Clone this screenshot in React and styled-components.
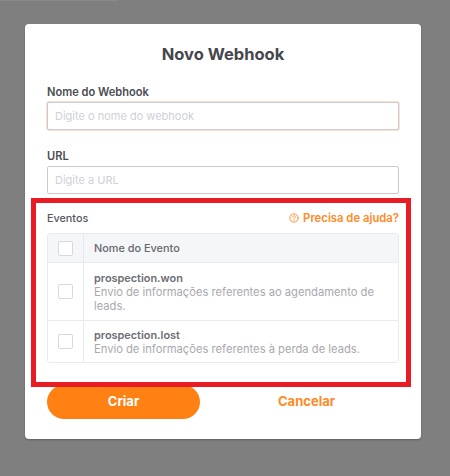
import React from 'react';
import styled, { createGlobalStyle } from 'styled-components';

const GlobalStyle = createGlobalStyle`
	html, body {
		margin: 0;
		padding: 0;
		height: 100%;
		background: #7f7f7f;
		font-family: Inter, "Open Sans", sans-serif;
	}
	* {
		box-sizing: border-box;
	}
`;

const Overlay = styled.div`
	position: relative;
	width: 450px;
	height: 476px;
	padding: 24px 29px 0 25px;
	overflow: hidden;
	background: #7f7f7f;

	&::before {
		content: '';
		position: absolute;
		top: 0;
		left: 0;
		width: 118px;
		height: 1px;
		background: #8a8a8a;
	}
`;

const Card = styled.form`
	position: relative;
	width: 396px;
	height: 415px;
	padding: 20px 22px 0;
	background: #fff;
	border-radius: 4px;
	box-shadow: 0 1px 2px rgba(0, 0, 0, 0.25);
`;

const Title = styled.h2`
	margin: 0 0 21px;
	height: 20px;
	font-size: 16.5px;
	line-height: 20px;
	font-weight: 700;
	text-align: center;
	color: #44464c;
`;

const Field = styled.div`
	display: flex;
	flex-direction: column;
	gap: 3px;
	margin-bottom: ${({ $last }) => ($last ? '17px' : '19px')};
`;

const Label = styled.label`
	height: 14px;
	font-size: 11.1px;
	line-height: 14px;
	font-weight: 600;
	color: #4a4c52;
`;

const Input = styled.input`
	width: 100%;
	height: 28px;
	padding: 0 7px;
	font-family: inherit;
	font-size: 11px;
	color: #44464c;
	background: #fff;
	border: 1px solid #c9cad3;
	border-radius: 2px;
	outline: none;
	box-shadow: ${({ $focused }) => ($focused ? '0 0 0 1px #fde3cf' : 'none')};

	&::placeholder {
		color: #cfd0d8;
		opacity: 1;
	}
`;

const EventsHeader = styled.div`
	display: flex;
	align-items: center;
	justify-content: space-between;
	height: 14px;
	margin-bottom: 8px;
`;

const EventsTitle = styled.span`
	font-size: 10.8px;
	font-weight: 500;
	color: #55575d;
`;

const HelpLink = styled.a`
	display: flex;
	align-items: center;
	gap: 4px;
	font-size: 11.3px;
	font-weight: 600;
	color: #ff8a26;
`;

const Table = styled.div`
	border: 1px solid #e9eaee;
	border-radius: 3px;
	overflow: hidden;
`;

const Row = styled.div`
	display: grid;
	grid-template-columns: 36px 1fr;
	height: ${({ $height }) => $height}px;
	background: ${({ $head }) => ($head ? '#f5f6f8' : '#fff')};
	border-top: ${({ $head }) => ($head ? 'none' : '1px solid #e9eaee')};
`;

const CheckCell = styled.div`
	display: flex;
	align-items: center;
	justify-content: center;
	border-right: 1px solid #e9eaee;
`;

const Check = styled.span`
	display: block;
	width: 15px;
	height: 15px;
	background: #fff;
	border: 1px solid #d8d9de;
	border-radius: 2px;
`;

const Cell = styled.div`
	display: flex;
	flex-direction: column;
	justify-content: center;
	padding: 0 10px;
`;

const HeadText = styled.span`
	font-size: 10.9px;
	font-weight: 500;
	color: #66686e;
`;

const EventName = styled.span`
	font-size: 10.9px;
	line-height: 14px;
	font-weight: 600;
	color: #6c6e74;
`;

const EventDesc = styled.span`
	font-size: 11.2px;
	line-height: 14px;
	color: #a8a9ae;
`;

const Actions = styled.div`
	display: grid;
	grid-template-columns: 153px 1fr;
	align-items: center;
	margin-top: 22px;
`;

const SubmitButton = styled.button`
	height: 34px;
	padding: 0 0 2px;
	border: none;
	border-radius: 17px;
	background: #ff8114;
	color: #fff;
	font-family: inherit;
	font-size: 13px;
	font-weight: 700;
`;

const CancelButton = styled.button`
	padding: 0 0 3px 14px;
	border: none;
	background: none;
	color: #ff8a26;
	font-family: inherit;
	font-size: 13px;
	font-weight: 700;
`;

const Highlight = styled.div`
	position: absolute;
	top: 174px;
	left: 6px;
	width: 380px;
	height: 189px;
	border: 5px solid #e81c24;
	pointer-events: none;
`;

const events = [
	{
		name: 'prospection.won',
		desc: 'Envio de informações referentes ao agendamento de leads.',
		height: 58,
	},
	{
		name: 'prospection.lost',
		desc: 'Envio de informações referentes à perda de leads.',
		height: 42,
	},
];

const HelpIcon = () => (
	<svg width="10" height="10" viewBox="0 0 24 24" fill="none" stroke="#ff8a26" strokeWidth="2.2" strokeLinecap="round">
		<circle cx="12" cy="12" r="10" />
		<path d="M9 9.5a3 3 0 1 1 4.6 2.5c-1 .7-1.6 1.3-1.6 2.5" />
		<path d="M12 18v.01" />
	</svg>
);

const App = () => {
	return (
		<Overlay>
			<GlobalStyle />
			<Card>
				<Title>Novo Webhook</Title>
				<Field>
					<Label>Nome do Webhook</Label>
					<Input $focused placeholder="Digite o nome do webhook" />
				</Field>
				<Field $last>
					<Label>URL</Label>
					<Input placeholder="Digite a URL" />
				</Field>
				<EventsHeader>
					<EventsTitle>Eventos</EventsTitle>
					<HelpLink>
						<HelpIcon />
						Precisa de ajuda?
					</HelpLink>
				</EventsHeader>
				<Table>
					<Row $head $height={28}>
						<CheckCell>
							<Check />
						</CheckCell>
						<Cell>
							<HeadText>Nome do Evento</HeadText>
						</Cell>
					</Row>
					{events.map((event) => (
						<Row key={event.name} $height={event.height}>
							<CheckCell>
								<Check />
							</CheckCell>
							<Cell>
								<EventName>{event.name}</EventName>
								<EventDesc>{event.desc}</EventDesc>
							</Cell>
						</Row>
					))}
				</Table>
				<Actions>
					<SubmitButton type="button">Criar</SubmitButton>
					<CancelButton type="button">Cancelar</CancelButton>
				</Actions>
				<Highlight />
			</Card>
		</Overlay>
	);
};

export default App;
